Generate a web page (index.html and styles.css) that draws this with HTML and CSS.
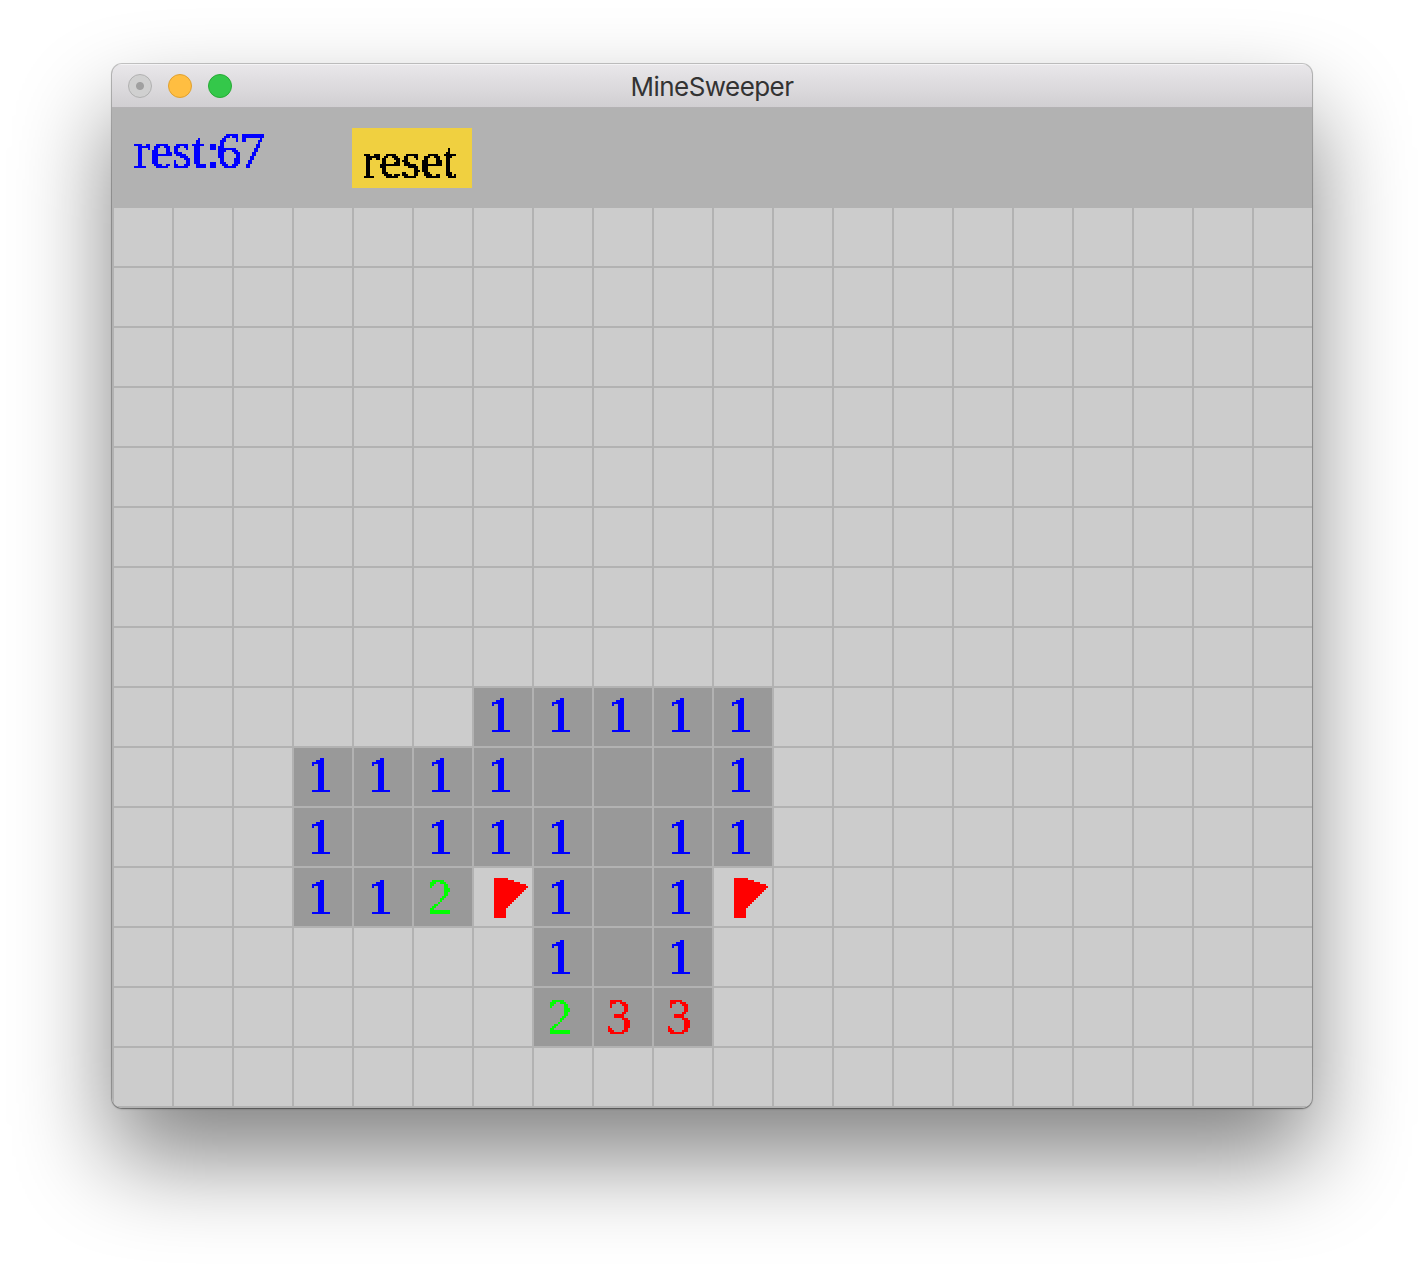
FILE: index.html
```html
<!DOCTYPE html>
<html lang="en">
<head>
<meta charset="utf-8">
<title>MineSweeper</title>
<link rel="stylesheet" href="styles.css">
</head>
<body>
<svg class="defs" width="0" height="0" aria-hidden="true">
  <filter id="pixelate" filterUnits="userSpaceOnUse" x="0" y="0" width="240" height="100" color-interpolation-filters="sRGB">
    <feFlood x="0" y="0" width="1" height="1" flood-color="#000"/>
    <feComposite x="0" y="0" width="2" height="2"/>
    <feTile result="dots"/>
    <feComposite in="SourceGraphic" in2="dots" operator="in" result="a"/>
    <feOffset in="a" dx="1" dy="0" result="b"/>
    <feOffset in="a" dx="0" dy="1" result="c"/>
    <feOffset in="a" dx="1" dy="1" result="d"/>
    <feMerge><feMergeNode in="a"/><feMergeNode in="b"/><feMergeNode in="c"/><feMergeNode in="d"/></feMerge>
    <feComponentTransfer><feFuncA type="discrete" tableValues="0 0 1 1 1"/></feComponentTransfer>
  </filter>
</svg>
<main class="window">
  <header class="titlebar">
    <div class="lights"><i class="light close"></i><i class="light minimize"></i><i class="light zoom"></i></div>
    <h1 class="title">MineSweeper</h1>
  </header>
  <section class="toolbar">
    <div class="rest pixel">rest:<span class="count">67</span></div>
    <button class="reset"><span class="pixel">reset</span></button>
  </section>
  <section class="board" id="board"></section>
</main>
<script src="script.js"></script>
</body>
</html>
```
FILE: styles.css
```css
* { box-sizing: border-box; }
body { margin: 0; background: #fff; width: 1424px; height: 1268px; padding: 64px 112px 0; overflow: hidden; }
.defs { display: block; width: 0; height: 0; position: absolute; }
.window {
  width: 1200px; height: 1044px; overflow: hidden; border-radius: 10px; background: #b2b2b2;
  box-shadow: 0 0 0 1px rgba(0,0,0,.2), 0 1px 2px rgba(0,0,0,.35), 0 50px 96px rgba(0,0,0,.49);
}
.titlebar {
  height: 44px; display: grid; grid-template-columns: 1fr auto 1fr; align-items: center; padding: 0 16px;
  background: linear-gradient(#e9e7ea, #d1cfd2); border-bottom: 1px solid #b4b2b4; box-shadow: inset 0 1px #f4f3f5;
}
.lights { display: flex; gap: 16px; padding-top: 1px; }
.light { width: 24px; height: 24px; border-radius: 50%; border: 1px solid; }
.close { background: radial-gradient(circle, #a0a0a0 3.5px, #d0d0d0 4.5px); border-color: #b0b0b0; }
.minimize { background: #ffbe41; border-color: #dfa030; }
.zoom { background: #34c84a; border-color: #27aa35; }
.title { margin: 3px 0 0; font: 400 26px/36px Inter, sans-serif; letter-spacing: -.55px; color: #333; }
.toolbar { height: 100px; display: flex; align-items: flex-start; padding-top: 20px; }
.pixel { font: 50px/60px "Liberation Serif", serif; filter: url(#pixelate); -webkit-text-stroke: .4px currentColor; }
.rest { width: 240px; height: 60px; padding-left: 21px; margin-top: -8px; color: #00f; white-space: nowrap; }
.count { margin-left: -3px; letter-spacing: -1.5px; }
.reset { width: 120px; height: 60px; padding: 0; border: 0; background: #f0d040; color: #000; }
.reset .pixel { display: block; width: 120px; height: 60px; padding-left: 10px; text-align: left; line-height: 64px; }
.board { display: grid; grid-template-columns: repeat(20, 60px); grid-auto-rows: 60px; }
.cell { border: solid #b2b2b2; border-width: 0 0 2px 2px; background: #ccc; }
.open { background: #999; }
.digit { display: block; width: 58px; height: 58px; padding-left: 13px; line-height: 52px; -webkit-text-stroke-width: .8px; }
.low { padding-top: 2px; }
.n1 { color: #00f; }
.n2 { color: #0f0; -webkit-text-stroke-width: 0; }
.n3 { color: #f00; padding-left: 12px; -webkit-text-stroke-width: .2px; }
.flag { display: block; margin: 10px 0 0 20px; fill: #f00; shape-rendering: crispEdges; }
```
FILE: script.js
```js
// "." covered, "o" open and empty, "F" flagged, digits are neighbour counts
const rows = [
  "....................", "....................", "....................", "....................",
  "....................", "....................", "....................", "....................",
  "......11111.........",
  "...1111ooo1.........",
  "...1o111o11.........",
  "...112F1o1F.........",
  ".......1o1..........",
  ".......233..........",
  "...................."
];
const flag = '<svg class="flag" width="34" height="40"><path d="M0 0H14V2H20V4H26V6H32V8H34V10H32V12H30V14H28V16H26V18H24V20H22V22H20V24H18V26H16V28H14V30H12V40H0Z"/></svg>';
document.getElementById("board").innerHTML = rows.map((row, y) => [...row].map(c => {
  if (c === ".") return '<div class="cell"></div>';
  if (c === "F") return `<div class="cell">${flag}</div>`;
  if (c === "o") return '<div class="cell open"></div>';
  return `<div class="cell open"><span class="digit pixel n${c}${y > 9 ? " low" : ""}">${c}</span></div>`;
}).join("")).join("");
```
